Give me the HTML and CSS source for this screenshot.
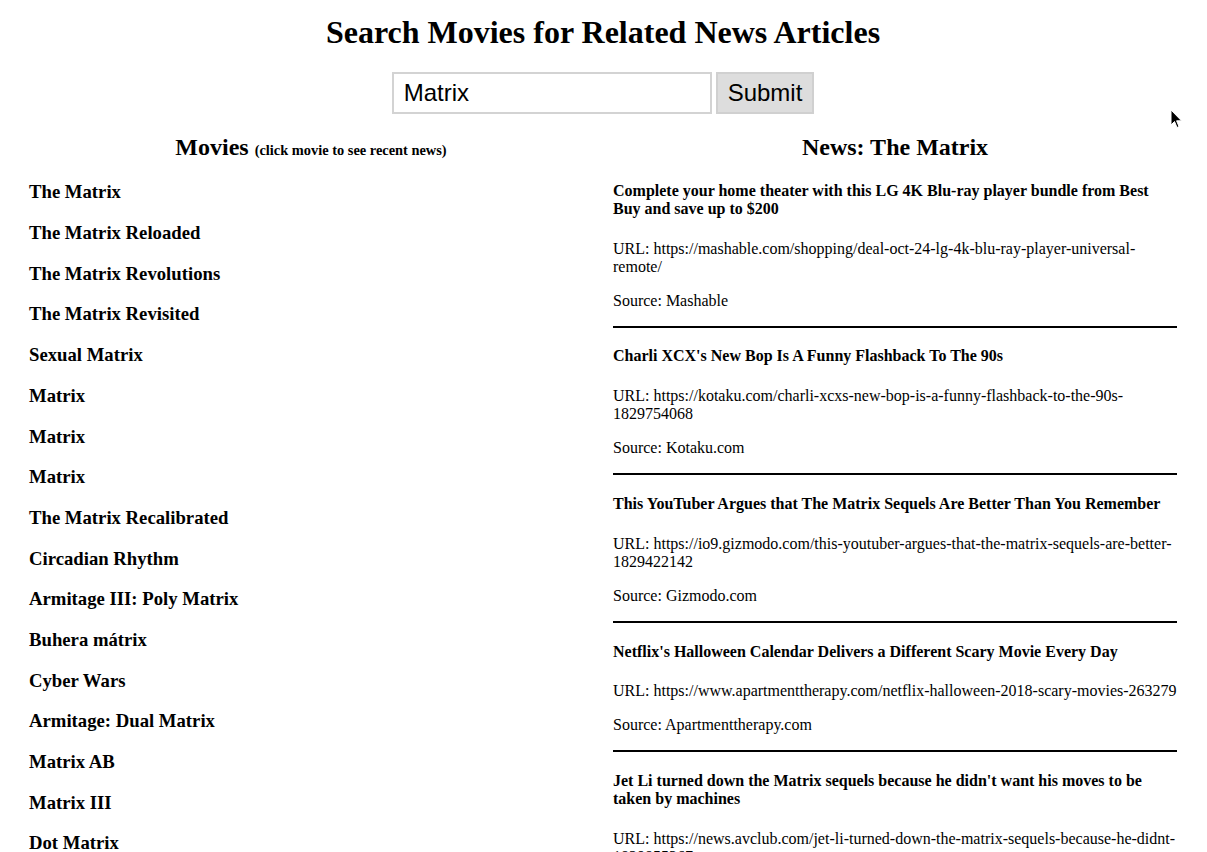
FILE: index.html
```html
<!DOCTYPE html>
<html lang="en">
<head>
<meta charset="utf-8">
<title>Search Movies for Related News Articles</title>
<link rel="stylesheet" href="styles.css">
</head>
<body>
<div class="page">
  <h1 class="title">Search Movies for Related News Articles</h1>
  <form class="search">
    <input class="search-input" type="text" value="Matrix"> <button class="search-btn" type="button">Submit</button>
  </form>
  <div class="columns">
    <section class="col">
      <h2 class="col-head col-head-movies">Movies <span class="hint">(click movie to see recent news)</span></h2>
      <h3 class="movie">The Matrix</h3>
      <h3 class="movie">The Matrix Reloaded</h3>
      <h3 class="movie">The Matrix Revolutions</h3>
      <h3 class="movie">The Matrix Revisited</h3>
      <h3 class="movie">Sexual Matrix</h3>
      <h3 class="movie">Matrix</h3>
      <h3 class="movie">Matrix</h3>
      <h3 class="movie">Matrix</h3>
      <h3 class="movie">The Matrix Recalibrated</h3>
      <h3 class="movie">Circadian Rhythm</h3>
      <h3 class="movie">Armitage III: Poly Matrix</h3>
      <h3 class="movie">Buhera mátrix</h3>
      <h3 class="movie">Cyber Wars</h3>
      <h3 class="movie">Armitage: Dual Matrix</h3>
      <h3 class="movie">Matrix AB</h3>
      <h3 class="movie">Matrix III</h3>
      <h3 class="movie">Dot Matrix</h3>
    </section>
    <section class="col">
      <h2 class="col-head col-head-news">News: The Matrix</h2>
      <article class="news">
        <h4 class="news-title">Complete your home theater with this LG 4K Blu-ray player bundle from Best Buy and save up to $200</h4>
        <p class="news-line">URL: https://mashable.com/shopping/deal-oct-24-lg-4k-blu-ray-player-universal-remote/</p>
        <p class="news-line">Source: Mashable</p>
        <hr class="rule">
      </article>
      <article class="news">
        <h4 class="news-title">Charli XCX's New Bop Is A Funny Flashback To The 90s</h4>
        <p class="news-line">URL: https://kotaku.com/charli-xcxs-new-bop-is-a-funny-flashback-to-the-90s-1829754068</p>
        <p class="news-line">Source: Kotaku.com</p>
        <hr class="rule">
      </article>
      <article class="news">
        <h4 class="news-title">This YouTuber Argues that The Matrix Sequels Are Better Than You Remember</h4>
        <p class="news-line">URL: https://io9.gizmodo.com/this-youtuber-argues-that-the-matrix-sequels-are-better-1829422142</p>
        <p class="news-line">Source: Gizmodo.com</p>
        <hr class="rule">
      </article>
      <article class="news">
        <h4 class="news-title">Netflix's Halloween Calendar Delivers a Different Scary Movie Every Day</h4>
        <p class="news-line">URL: https://www.apartmenttherapy.com/netflix-halloween-2018-scary-movies-263279</p>
        <p class="news-line">Source: Apartmenttherapy.com</p>
        <hr class="rule">
      </article>
      <article class="news">
        <h4 class="news-title">Jet Li turned down the Matrix sequels because he didn't want his moves to be taken by machines</h4>
        <p class="news-line">URL: https://news.avclub.com/jet-li-turned-down-the-matrix-sequels-because-he-didnt-1829855367</p>
        <p class="news-line">Source: Avclub.com</p>
        <hr class="rule">
      </article>
    </section>
  </div>
</div>
<svg class="cursor" width="14" height="22" viewBox="0 0 14 22" aria-hidden="true">
  <path d="M1 1 L1 16 L4.5 12.5 L7 18.5 L9 17.6 L6.6 11.8 L11.5 11.8 Z" fill="#000" stroke="#fff" stroke-width="1" stroke-linejoin="round"/>
</svg>
</body>
</html>
```
FILE: styles.css
```css
html, body {
  margin: 0;
  padding: 0;
  background: #fff;
}
body {
  font-family: "Liberation Serif", "Times New Roman", serif;
  font-size: 16px;
  color: #000;
  position: relative;
}
.page {
  padding: 0 30px 0 29px;
}
.title {
  font-size: 32px;
  font-weight: bold;
  text-align: center;
  margin: 0;
  padding-top: 14px;
  line-height: 36px;
  margin-bottom: 22px;
}
.search {
  text-align: center;
  margin: 0;
  font-size: 16px;
  line-height: 0;
}
.search-input {
  box-sizing: border-box;
  width: 320px;
  height: 42px;
  border: 2px solid #d3d3d3;
  padding: 0 10px;
  font-family: "Liberation Sans", Arial, sans-serif;
  font-size: 24px;
  color: #000;
  background: #fff;
  vertical-align: top;
  outline: none;
}
.search-btn {
  box-sizing: border-box;
  height: 42px;
  border: 2px solid #d0d0d0;
  background: #dddddd;
  padding: 0 10px;
  font-family: "Liberation Sans", Arial, sans-serif;
  font-size: 24px;
  color: #000;
  vertical-align: top;
  border-radius: 0;
}
.columns {
  display: grid;
  grid-template-columns: 1fr 1fr;
  column-gap: 20px;
}
.col {
  min-width: 0;
}
.col-head {
  font-size: 24px;
  font-weight: bold;
  text-align: center;
  margin: 19.9px 0 0;
  line-height: normal;
}
.col-head-movies {
  margin-bottom: 20.5px;
}
.col-head-news {
  margin-bottom: 21px;
}
.hint {
  font-size: 14.4px;
}
.movie {
  font-size: 18.72px;
  font-weight: bold;
  line-height: 22px;
  margin: 16.7px 0 18.7px;
  cursor: pointer;
}
.news-title {
  font-size: 16px;
  font-weight: bold;
  line-height: 18px;
  margin: 19.8px 0 21.8px;
}
.news-line {
  margin: 16px 0;
  line-height: 18px;
  overflow-wrap: break-word;
}
.rule {
  border: 0;
  border-top: 2px solid #000;
  height: 0;
  margin: 8px 0;
}
.cursor {
  position: absolute;
  left: 1170px;
  top: 109px;
}
```
